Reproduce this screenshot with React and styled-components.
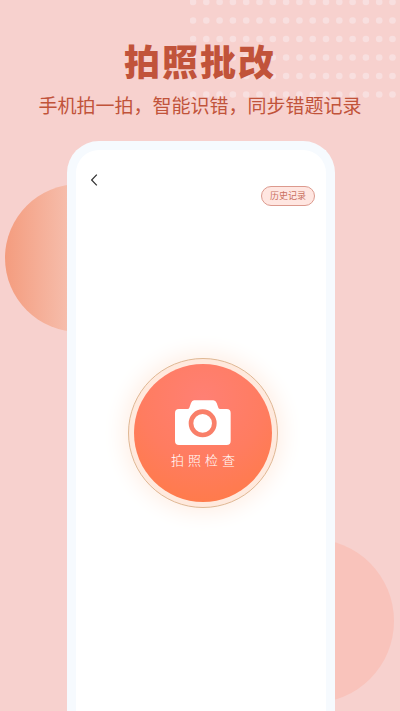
import React from 'react';
import styled, { createGlobalStyle } from 'styled-components';

const GlobalStyle = createGlobalStyle`
  *, *::before, *::after {
    box-sizing: border-box;
  }

  body {
    margin: 0;
    background-color: #f7d1ce;
    font-family: "Noto Sans CJK SC", "Noto Sans", sans-serif;
  }
`;

const Page = styled.main`
  position: relative;
  display: flex;
  flex-direction: column;
  min-height: 100vh;
  overflow: hidden;
  background-color: #f7d1ce;
`;

const Dots = styled.svg`
  position: absolute;
  top: 0;
  right: 0;
`;

const Circle = styled.div`
  position: absolute;
  border-radius: 50%;
`;

const LeftCircle = styled(Circle)`
  top: 184px;
  left: 5px;
  width: 148px;
  height: 148px;
  background: linear-gradient(90deg, #f49c7e 0%, #f6bfae 45%, #f7d1ce 100%);
`;

const RightCircle = styled(Circle)`
  right: 6px;
  bottom: 8px;
  width: 164px;
  height: 164px;
  background-color: #f9c3bb;
`;

const Header = styled.header`
  position: relative;
  display: flex;
  flex-direction: column;
  align-items: center;
  gap: 12px;
  padding-top: 40px;
  color: #c1533a;
  text-align: center;
`;

const Title = styled.h1`
  margin: 0;
  font-size: 36px;
  font-weight: 900;
  letter-spacing: 2px;
  line-height: 40px;
`;

const Subtitle = styled.p`
  margin: 0;
  font-size: 19px;
  line-height: 26px;
  white-space: nowrap;
`;

const Phone = styled.section`
  position: relative;
  flex: 1;
  display: flex;
  flex-direction: column;
  margin: 23px 65px 0 67px;
  padding: 20px 11px 0 15px;
  border: 9px solid #f6fafe;
  border-bottom: 0;
  border-radius: 32px 32px 0 0;
  background-color: #fff;
`;

const BackButton = styled.button`
  display: flex;
  align-self: flex-start;
  padding: 4px 0;
  border: 0;
  background: none;
  color: #333;
  cursor: pointer;
`;

const HistoryButton = styled.button`
  align-self: flex-end;
  margin-top: -4px;
  padding: 0 8px;
  border: 1px solid #dc9a8e;
  border-radius: 10px;
  background-color: #ffe6e1;
  color: #c9705f;
  font-family: inherit;
  font-size: 9px;
  line-height: 18px;
  cursor: pointer;
`;

const Ring = styled.div`
  align-self: center;
  margin-top: 152px;
  padding: 5px;
  border: 1px solid #dfb894;
  border-radius: 50%;
  background-color: #ffe9dd;
  box-shadow: 0 0 22px 4px #ffeee4;
`;

const CheckButton = styled.button`
  display: flex;
  flex-direction: column;
  align-items: center;
  gap: 5px;
  width: 138px;
  height: 138px;
  padding: 36px 0 0;
  border: 0;
  border-radius: 50%;
  background: radial-gradient(circle at 50% 25%, #ff8074 0%, #ff7c60 50%, #ff7a42 100%);
  color: #fff;
  font-family: inherit;
  font-size: 13px;
  line-height: 20px;
  cursor: pointer;
`;

const CheckLabel = styled.span`
  padding-left: 4px;
  font-weight: 300;
  letter-spacing: 4px;
`;

const COLUMNS = 16;
const ROWS = 6;

function DotGrid() {
  const dots = [];
  for (let row = 0; row < ROWS; row++) {
    for (let col = 0; col < COLUMNS; col++) {
      dots.push(
        <circle key={`${row}-${col}`} cx={3 + col * 13.3} cy={2 + row * 18.5} r="3.3" />
      );
    }
  }
  return (
    <Dots width="210" height="100" fill="#f8dfdf" aria-hidden="true">
      {dots}
    </Dots>
  );
}

function ChevronIcon() {
  return (
    <svg width="7" height="12" viewBox="0 0 7 12" fill="none" stroke="currentColor" strokeWidth="1.3" aria-hidden="true">
      <path d="M5.8 0.6 0.6 6l5.2 5.4" />
    </svg>
  );
}

function CameraIcon() {
  return (
    <svg width="56" height="45" viewBox="0 0 168 135" aria-hidden="true">
      <path
        fill="#fff"
        d="M12 27h25q5 0 6-4l5-14q3-8 9-8h58q7 0 10 8l5 14q1 4 6 4h19q12 0 12 12v84q0 12-12 12H12q-12 0-12-12V39q0-12 12-12z"
      />
      <circle cx="83" cy="70" r="35" fill="none" stroke="#f97f69" strokeWidth="14" />
    </svg>
  );
}

function App() {
  return (
    <>
      <GlobalStyle />
      <Page>
        <DotGrid />
        <LeftCircle />
        <RightCircle />
        <Header>
          <Title>拍照批改</Title>
          <Subtitle>手机拍一拍，智能识错，同步错题记录</Subtitle>
        </Header>
        <Phone>
          <BackButton type="button" aria-label="返回">
            <ChevronIcon />
          </BackButton>
          <HistoryButton type="button">历史记录</HistoryButton>
          <Ring>
            <CheckButton type="button">
              <CameraIcon />
              <CheckLabel>拍照检查</CheckLabel>
            </CheckButton>
          </Ring>
        </Phone>
      </Page>
    </>
  );
}

export default App;
